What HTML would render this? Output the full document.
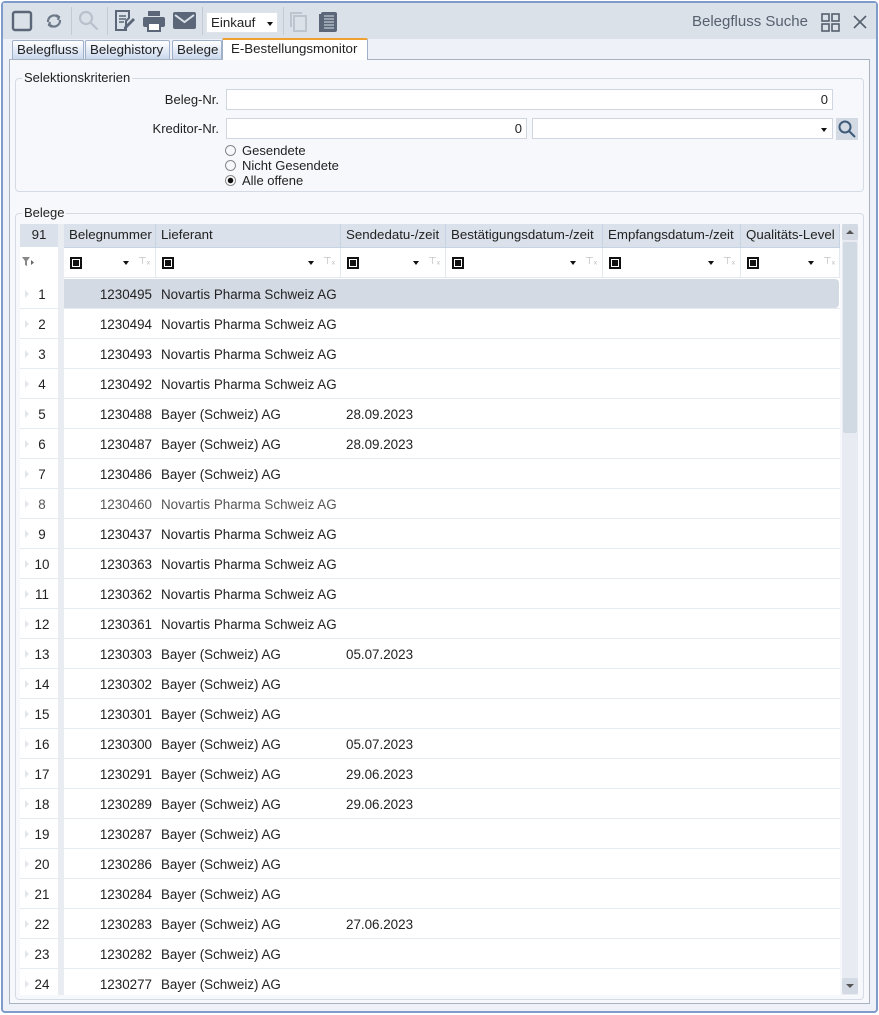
<!DOCTYPE html>
<html><head><meta charset="utf-8"><style>
*{box-sizing:border-box;margin:0;padding:0}
body{width:879px;height:1015px;background:#fff;font-family:"Liberation Sans",sans-serif;font-size:13px;color:#222;position:relative;overflow:hidden}
.win{position:absolute;left:1px;top:1px;width:877px;height:1012px;border:2px solid #7e9bc9;border-radius:4px;background:#eef1f7}
.tb{position:absolute;left:0;top:0;right:0;height:36px;background:#dae1e9}
.abs{position:absolute}
.tab{position:absolute;top:40px;height:19px;border:1px solid #9fb0c8;border-bottom:none;background:linear-gradient(#fff,#c9d8ee);padding:1px 4px;font-size:13.3px;border-radius:2px 2px 0 0}
.panel{position:absolute;left:9px;top:59px;width:861px;height:945px;border:1px solid #a9b2bf;background:#f6f8fc}
.fs{position:absolute;border:1px solid #d5dbe4;border-radius:4px}
.leg{position:absolute;top:-9px;left:6px;background:#f6f8fc;padding:0 2px;font-size:13px}
.inp{position:absolute;height:21px;border:1px solid #cfd6e0;background:#fff;text-align:right;padding:2px 4px;font-size:13px}
.lbl{position:absolute;text-align:right;font-size:13px}
.rad{position:absolute;font-size:13px;line-height:15px}
.rad i{display:inline-block;width:11px;height:11px;border:1px solid #888;border-radius:50%;vertical-align:-1px;margin-right:6px;position:relative}
.grid{position:absolute;left:20px;top:224px;width:820px;height:771px;background:#fff;overflow:hidden}
.hd{position:absolute;top:0;height:23px;background:#dae1ea;border-right:1px solid #c6d3e4;padding:3px 5px;font-size:13.3px;white-space:nowrap;overflow:hidden}
.fr{position:absolute;top:24px;height:30px;border-right:1px solid #e3e8ef}
.fr b{position:absolute;left:6px;top:9px;width:12px;height:12px;border:2px solid #111;background:#fff}
.fr b:after{content:"";position:absolute;left:1px;top:1px;width:6px;height:6px;background:#111}
.fr s{position:absolute;top:13px;width:0;height:0;border-left:3px solid transparent;border-right:3px solid transparent;border-top:4px solid #111}
.fr u{position:absolute;top:8px;font-size:10px;color:#bbb;text-decoration:none}
.row{position:absolute;left:0;width:820px;height:30px;border-bottom:1px solid #e6ebf2;font-size:13.4px}
.row span{position:absolute;top:8px;white-space:nowrap}
.row .n{left:0;width:38px;text-align:center;padding-left:6px}
.row .n:before{content:"";position:absolute;left:5px;top:3px;border-top:4px solid transparent;border-bottom:4px solid transparent;border-left:4px solid #e3e6ea}
.row .b{left:44px;width:88px;text-align:right}
.row .l{left:141px}
.row .d{left:326px}
.sel{background:#d3dae4;border-radius:0 4px 4px 0}
</style></head><body>
<div class="win">
<div class="tb">
 <svg class="abs" style="left:8px;top:7px" width="24" height="22"><rect x="2" y="2" width="18" height="18" rx="2" fill="none" stroke="#5b6778" stroke-width="2.4"/></svg>
 <svg class="abs" style="left:40px;top:7px" width="22" height="22" fill="none" stroke="#6c7888" stroke-width="2.2"><path d="M5 12a6 6 0 0 1 10-5"/><path d="M17 10a6 6 0 0 1-10 5"/><path d="M13 5l3 2-1 3" /><path d="M9 17l-3-2 1-3"/></svg>
 <div class="abs" style="left:68px;top:4px;width:1px;height:28px;background:#c3cad3"></div>
 <svg class="abs" style="left:74px;top:6px" width="24" height="24" fill="none" stroke="#b9c1cc" stroke-width="2.2"><circle cx="9" cy="9" r="6"/><path d="M13.5 13.5l7 7"/></svg>
 <div class="abs" style="left:104px;top:4px;width:1px;height:28px;background:#c3cad3"></div>
 <svg class="abs" style="left:110px;top:6px" width="24" height="24"><path d="M3 2h13v7l-3 3v9H3z" fill="none" stroke="#5b6778" stroke-width="2"/><path d="M6 7h7M6 10h7M6 13h5" stroke="#5b6778" stroke-width="1.6"/><path d="M11 18l9-9 2 2-9 9h-2z" fill="#5b6778"/></svg>
 <svg class="abs" style="left:139px;top:7px" width="26" height="22"><rect x="6" y="1" width="12" height="5" fill="#5b6778"/><rect x="1" y="7" width="22" height="10" rx="2" fill="#5b6778"/><rect x="6" y="13" width="12" height="8" fill="#fff" stroke="#5b6778" stroke-width="2"/></svg>
 <svg class="abs" style="left:170px;top:9px" width="24" height="18"><rect x="0" y="0" width="23" height="17" rx="2" fill="#5b6778"/><path d="M2 3l9.5 7 9.5-7" fill="none" stroke="#dae1e9" stroke-width="2"/></svg>
 <div class="abs" style="left:199px;top:4px;width:1px;height:28px;background:#c3cad3"></div>
 <div class="abs" style="left:203px;top:9px;width:72px;height:21px;background:#fff;border:1px solid #dfe4ea;padding:2px 4px;font-size:13.3px">Einkauf<span style="position:absolute;left:60px;top:9px;border-left:3px solid transparent;border-right:3px solid transparent;border-top:4px solid #111"></span></div>
 <div class="abs" style="left:280px;top:4px;width:1px;height:28px;background:#c3cad3"></div>
 <svg class="abs" style="left:285px;top:7px" width="22" height="24" fill="none" stroke="#bcc4ce" stroke-width="2"><rect x="6" y="6" width="12" height="15"/><path d="M3 17V3h11"/></svg>
 <svg class="abs" style="left:314px;top:7px" width="22" height="24"><rect x="4" y="2" width="16" height="20" rx="2" fill="#5b6778"/><rect x="2" y="4" width="3" height="18" fill="#5b6778"/><path d="M7 6h10M7 9h10M7 12h10M7 15h10M7 18h10" stroke="#dae1e9" stroke-width="1"/></svg>
 <div class="abs" style="left:689px;top:10px;font-size:15px;color:#56606e">Belegfluss Suche</div>
 <svg class="abs" style="left:818px;top:10px" width="20" height="20" fill="none" stroke="#56606e" stroke-width="1.6"><rect x="1" y="1" width="7" height="7"/><rect x="11" y="1" width="7" height="7"/><rect x="1" y="11" width="7" height="7"/><rect x="11" y="11" width="7" height="7"/></svg>
 <svg class="abs" style="left:850px;top:12px" width="14" height="14" stroke="#56606e" stroke-width="1.6"><path d="M1 1l12 12M13 1L1 13"/></svg>
</div>
</div>
<div class="tab" style="left:12px;width:72px">Belegfluss</div>
<div class="tab" style="left:85px;width:85px">Beleghistory</div>
<div class="tab" style="left:172px;width:50px">Belege</div>
<div class="tab" style="left:222px;top:38px;width:146px;height:22px;background:#fff;border-top:2px solid #f0a030;border-color:#9fb0c8;border-top-color:#f0a030;padding-left:8px;z-index:2">E-Bestellungsmonitor</div>
<div class="panel"></div>
<div class="fs" style="left:15px;top:78px;width:849px;height:114px"><div class="leg">Selektionskriterien</div></div>
<div class="lbl" style="left:100px;top:92px;width:119px">Beleg-Nr.</div>
<div class="inp" style="left:226px;top:89px;width:607px">0</div>
<div class="lbl" style="left:100px;top:121px;width:119px">Kreditor-Nr.</div>
<div class="inp" style="left:226px;top:118px;width:301px">0</div>
<div class="inp" style="left:532px;top:118px;width:301px"><span style="position:absolute;right:5px;top:9px;border-left:3px solid transparent;border-right:3px solid transparent;border-top:4px solid #111"></span></div>
<div class="abs" style="left:836px;top:118px;width:22px;height:22px;background:#d3dae4"></div>
<svg class="abs" style="left:837px;top:119px" width="20" height="20" fill="none" stroke="#3d5a78" stroke-width="2"><circle cx="8" cy="8" r="5.5"/><path d="M12 12l6 6"/></svg>
<div class="rad" style="left:225px;top:143px"><i></i>Gesendete</div>
<div class="rad" style="left:225px;top:158px"><i></i>Nicht Gesendete</div>
<div class="rad" style="left:225px;top:173px"><i style="background:radial-gradient(circle,#111 2.5px,#fff 3px)"></i>Alle offene</div>
<div class="fs" style="left:15px;top:213px;width:849px;height:787px"><div class="leg">Belege</div></div>
<div class="grid">
 <div class="hd" style="left:0;width:38px;text-align:center;border-right:none">91</div>
 <div class="abs" style="left:38px;top:0;width:6px;height:771px;background:#e9ecf0"></div>
 <div class="hd" style="left:44px;width:92px">Belegnummer</div>
 <div class="hd" style="left:136px;width:185px">Lieferant</div>
 <div class="hd" style="left:321px;width:105px">Sendedatu-/zeit</div>
 <div class="hd" style="left:426px;width:157px">Bestätigungsdatum-/zeit</div>
 <div class="hd" style="left:583px;width:138px">Empfangsdatum-/zeit</div>
 <div class="hd" style="left:721px;width:99px">Qualitäts-Level</div>
 <div class="abs" style="left:44px;top:23px;width:776px;height:1px;background:#c6d3e4"></div>
 <svg class="abs" style="left:2px;top:33px" width="12" height="10"><path d="M0 0h8L5 4v5L3 8V4z" fill="#888"/><path d="M9 3l3 2.5-3 2.5z" fill="#666"/></svg>
 <div class="fr" style="left:44px;width:92px"><b></b><s style="left:59px"></s><u style="left:74px">⊤ₓ</u></div>
 <div class="fr" style="left:136px;width:185px"><b></b><s style="left:152px"></s><u style="left:167px">⊤ₓ</u></div>
 <div class="fr" style="left:321px;width:105px"><b></b><s style="left:72px"></s><u style="left:87px">⊤ₓ</u></div>
 <div class="fr" style="left:426px;width:157px"><b></b><s style="left:124px"></s><u style="left:139px">⊤ₓ</u></div>
 <div class="fr" style="left:583px;width:138px"><b></b><s style="left:105px"></s><u style="left:120px">⊤ₓ</u></div>
 <div class="fr" style="left:721px;width:99px"><b></b><s style="left:67px"></s><u style="left:82px">⊤ₓ</u></div>
 <div class="abs" style="left:44px;top:53px;width:776px;height:1px;background:#e3e8ef"></div>
 <div class="abs sel" style="left:44px;top:55px;width:775px;height:29px"></div>
 <div class="row" style="top:55px"><span class="n">1</span><span class="b">1230495</span><span class="l">Novartis Pharma Schweiz AG</span></div>
 <div class="row" style="top:85px"><span class="n">2</span><span class="b">1230494</span><span class="l">Novartis Pharma Schweiz AG</span></div>
 <div class="row" style="top:115px"><span class="n">3</span><span class="b">1230493</span><span class="l">Novartis Pharma Schweiz AG</span></div>
 <div class="row" style="top:145px"><span class="n">4</span><span class="b">1230492</span><span class="l">Novartis Pharma Schweiz AG</span></div>
 <div class="row" style="top:175px"><span class="n">5</span><span class="b">1230488</span><span class="l">Bayer (Schweiz) AG</span><span class="d">28.09.2023</span></div>
 <div class="row" style="top:205px"><span class="n">6</span><span class="b">1230487</span><span class="l">Bayer (Schweiz) AG</span><span class="d">28.09.2023</span></div>
 <div class="row" style="top:235px"><span class="n">7</span><span class="b">1230486</span><span class="l">Bayer (Schweiz) AG</span></div>
 <div class="row" style="top:265px;color:#555"><span class="n">8</span><span class="b">1230460</span><span class="l">Novartis Pharma Schweiz AG</span></div>
 <div class="row" style="top:295px"><span class="n">9</span><span class="b">1230437</span><span class="l">Novartis Pharma Schweiz AG</span></div>
 <div class="row" style="top:325px"><span class="n">10</span><span class="b">1230363</span><span class="l">Novartis Pharma Schweiz AG</span></div>
 <div class="row" style="top:355px"><span class="n">11</span><span class="b">1230362</span><span class="l">Novartis Pharma Schweiz AG</span></div>
 <div class="row" style="top:385px"><span class="n">12</span><span class="b">1230361</span><span class="l">Novartis Pharma Schweiz AG</span></div>
 <div class="row" style="top:415px"><span class="n">13</span><span class="b">1230303</span><span class="l">Bayer (Schweiz) AG</span><span class="d">05.07.2023</span></div>
 <div class="row" style="top:445px"><span class="n">14</span><span class="b">1230302</span><span class="l">Bayer (Schweiz) AG</span></div>
 <div class="row" style="top:475px"><span class="n">15</span><span class="b">1230301</span><span class="l">Bayer (Schweiz) AG</span></div>
 <div class="row" style="top:505px"><span class="n">16</span><span class="b">1230300</span><span class="l">Bayer (Schweiz) AG</span><span class="d">05.07.2023</span></div>
 <div class="row" style="top:535px"><span class="n">17</span><span class="b">1230291</span><span class="l">Bayer (Schweiz) AG</span><span class="d">29.06.2023</span></div>
 <div class="row" style="top:565px"><span class="n">18</span><span class="b">1230289</span><span class="l">Bayer (Schweiz) AG</span><span class="d">29.06.2023</span></div>
 <div class="row" style="top:595px"><span class="n">19</span><span class="b">1230287</span><span class="l">Bayer (Schweiz) AG</span></div>
 <div class="row" style="top:625px"><span class="n">20</span><span class="b">1230286</span><span class="l">Bayer (Schweiz) AG</span></div>
 <div class="row" style="top:655px"><span class="n">21</span><span class="b">1230284</span><span class="l">Bayer (Schweiz) AG</span></div>
 <div class="row" style="top:685px"><span class="n">22</span><span class="b">1230283</span><span class="l">Bayer (Schweiz) AG</span><span class="d">27.06.2023</span></div>
 <div class="row" style="top:715px"><span class="n">23</span><span class="b">1230282</span><span class="l">Bayer (Schweiz) AG</span></div>
 <div class="row" style="top:745px;border-bottom:none"><span class="n">24</span><span class="b">1230277</span><span class="l">Bayer (Schweiz) AG</span></div>
</div>
<div class="abs" style="left:842px;top:224px;width:16px;height:771px;background:#e8ecf2"></div>
<div class="abs" style="left:842px;top:224px;width:16px;height:16px;background:#d3dae4;border-radius:2px"><span style="position:absolute;left:4px;top:6px;border-left:4px solid transparent;border-right:4px solid transparent;border-bottom:4px solid #555"></span></div>
<div class="abs" style="left:843px;top:242px;width:14px;height:191px;background:#d1d9e2;border-radius:2px"></div>
<div class="abs" style="left:842px;top:978px;width:16px;height:16px;background:#d3dae4;border-radius:2px"><span style="position:absolute;left:4px;top:6px;border-left:4px solid transparent;border-right:4px solid transparent;border-top:4px solid #555"></span></div>
</body></html>
